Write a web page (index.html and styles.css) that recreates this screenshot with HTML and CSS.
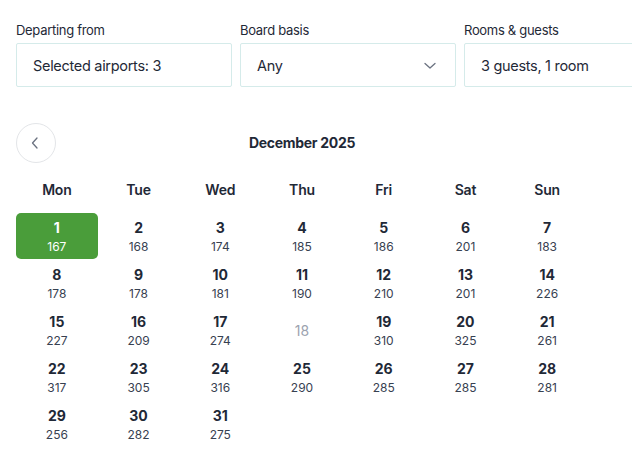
FILE: index.html
```html
<!DOCTYPE html>
<html>
<head>
<meta charset="utf-8">
<link rel="stylesheet" href="styles.css">
</head>
<body>
<div class="page">
  <div class="fields">
    <div class="field">
      <div class="label">Departing from</div>
      <div class="box">Selected airports: 3</div>
    </div>
    <div class="field">
      <div class="label">Board basis</div>
      <div class="box select">Any
        <svg class="chev" width="12" height="8" viewBox="0 0 12 8"><path d="M1 1.5 L6 6 L11 1.5" fill="none" stroke="#6b7280" stroke-width="1.3" stroke-linecap="round" stroke-linejoin="round"/></svg>
      </div>
    </div>
    <div class="field">
      <div class="label">Rooms &amp; guests</div>
      <div class="box">3 guests, 1 room</div>
    </div>
  </div>

  <div class="calendar">
    <div class="cal-head">
      <button class="nav"><svg width="8" height="12" viewBox="0 0 8 12"><path d="M6 1 L1.5 6 L6 11" fill="none" stroke="#6b7280" stroke-width="1.3" stroke-linecap="round" stroke-linejoin="round"/></svg></button>
      <div class="title">December 2025</div>
      <div class="spacer"></div>
    </div>
    <div class="weekdays">
      <div>Mon</div><div>Tue</div><div>Wed</div><div>Thu</div><div>Fri</div><div>Sat</div><div>Sun</div>
    </div>
    <div class="days">
      <div class="day selected"><span class="n">1</span><span class="p">167</span></div>
      <div class="day"><span class="n">2</span><span class="p">168</span></div>
      <div class="day"><span class="n">3</span><span class="p">174</span></div>
      <div class="day"><span class="n">4</span><span class="p">185</span></div>
      <div class="day"><span class="n">5</span><span class="p">186</span></div>
      <div class="day"><span class="n">6</span><span class="p">201</span></div>
      <div class="day"><span class="n">7</span><span class="p">183</span></div>

      <div class="day"><span class="n">8</span><span class="p">178</span></div>
      <div class="day"><span class="n">9</span><span class="p">178</span></div>
      <div class="day"><span class="n">10</span><span class="p">181</span></div>
      <div class="day"><span class="n">11</span><span class="p">190</span></div>
      <div class="day"><span class="n">12</span><span class="p">210</span></div>
      <div class="day"><span class="n">13</span><span class="p">201</span></div>
      <div class="day"><span class="n">14</span><span class="p">226</span></div>

      <div class="day"><span class="n">15</span><span class="p">227</span></div>
      <div class="day"><span class="n">16</span><span class="p">209</span></div>
      <div class="day"><span class="n">17</span><span class="p">274</span></div>
      <div class="day disabled"><span class="n">18</span></div>
      <div class="day"><span class="n">19</span><span class="p">310</span></div>
      <div class="day"><span class="n">20</span><span class="p">325</span></div>
      <div class="day"><span class="n">21</span><span class="p">261</span></div>

      <div class="day"><span class="n">22</span><span class="p">317</span></div>
      <div class="day"><span class="n">23</span><span class="p">305</span></div>
      <div class="day"><span class="n">24</span><span class="p">316</span></div>
      <div class="day"><span class="n">25</span><span class="p">290</span></div>
      <div class="day"><span class="n">26</span><span class="p">285</span></div>
      <div class="day"><span class="n">27</span><span class="p">285</span></div>
      <div class="day"><span class="n">28</span><span class="p">281</span></div>

      <div class="day"><span class="n">29</span><span class="p">256</span></div>
      <div class="day"><span class="n">30</span><span class="p">282</span></div>
      <div class="day"><span class="n">31</span><span class="p">275</span></div>
    </div>
  </div>
</div>
</body>
</html>
```

FILE: styles.css
```css
html, body {
  margin: 0;
  padding: 0;
  background: #ffffff;
  overflow: hidden;
}
body {
  font-family: Inter, "Noto Sans", "DejaVu Sans", sans-serif;
  color: #1f2937;
  width: 632px;
}
.page {
  padding: 21px 0 0 16px;
  overflow: hidden;
}
.fields {
  display: flex;
  gap: 8px;
}
.field {
  width: 216px;
  flex: none;
}
.label {
  font-size: 13px;
  line-height: 18px;
  color: #1f2937;
  margin-bottom: 4px;
  letter-spacing: -0.3px;
}
.box {
  box-sizing: border-box;
  height: 44px;
  border: 1px solid #d5ebea;
  border-radius: 2px;
  padding: 1px 16px 0;
  display: flex;
  align-items: center;
  font-size: 14.5px;
  color: #1f2937;
  letter-spacing: -0.3px;
}
.select {
  justify-content: space-between;
  padding-right: 19px;
}
.calendar {
  width: 572px;
  margin-top: 36px;
}
.cal-head {
  display: flex;
  align-items: center;
  height: 40px;
}
.nav {
  box-sizing: border-box;
  width: 40px;
  height: 40px;
  border-radius: 50%;
  border: 1px solid #e3e5e8;
  background: #fff;
  display: flex;
  align-items: center;
  justify-content: center;
  padding: 0 2px 0 0;
}
.spacer {
  width: 40px;
}
.title {
  flex: 1;
  text-align: center;
  font-size: 14px;
  font-weight: 700;
  color: #1f2937;
  letter-spacing: -0.3px;
  margin-top: -1px;
}
.weekdays {
  display: grid;
  grid-template-columns: repeat(7, 1fr);
  margin-top: 14px;
  height: 26px;
  line-height: 26px;
  margin-bottom: 10px;
  text-align: center;
  font-size: 14px;
  font-weight: 600;
  color: #1f2937;
  letter-spacing: -0.2px;
}
.days {
  display: grid;
  grid-template-columns: repeat(7, 1fr);
  grid-auto-rows: 47px;
}
.day {
  display: flex;
  flex-direction: column;
  align-items: center;
  justify-content: center;
  border-radius: 5px;
  padding-top: 2px;
  box-sizing: border-box;
}
.day .n {
  font-size: 14px;
  font-weight: 700;
  line-height: 18px;
  color: #1f2937;
}
.day .p {
  font-size: 12px;
  line-height: 18px;
  margin-top: 1px;
  color: #374151;
}
.day.selected {
  background: #4a9d3a;
  height: 46px;
}
.day.selected .n,
.day.selected .p {
  color: #ffffff;
}
.day.disabled .n {
  font-weight: 400;
  color: #9ca3af;
  margin-top: -2px;
}
```
